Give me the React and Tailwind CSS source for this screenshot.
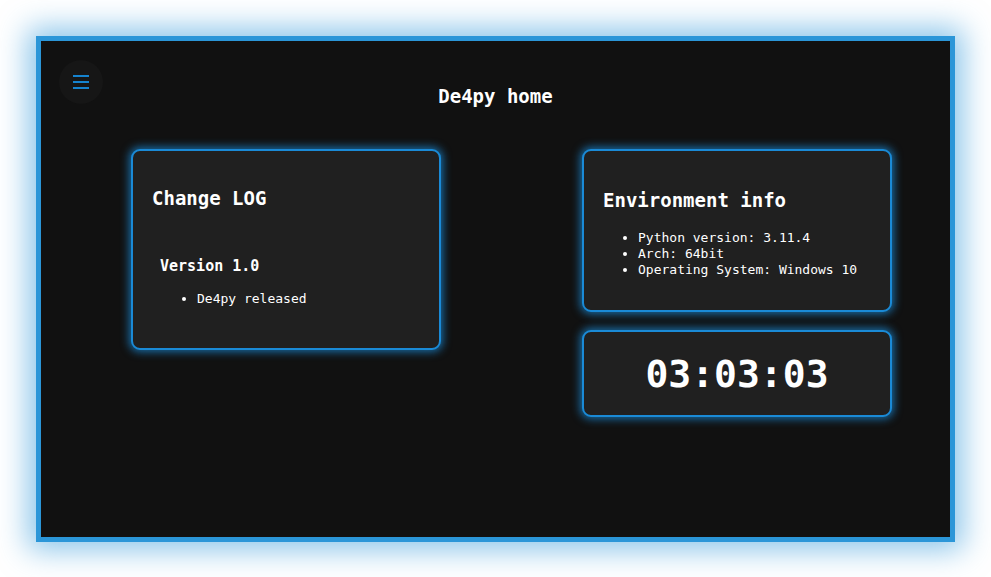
const mono = { fontFamily: '"DejaVu Sans Mono", "Liberation Mono", monospace' };

function Card({ className = '', children }) {
  return (
    <div
      className={`rounded-[9px] border-2 border-[#1a8ad6] bg-[#202020] shadow-[0_0_9px_2px_rgba(26,138,214,0.75)] ${className}`}
    >
      {children}
    </div>
  );
}

export default function App() {
  const env = [
    'Python version: 3.11.4',
    'Arch: 64bit',
    'Operating System: Windows 10',
  ];

  return (
    <div className="h-[577px] w-full bg-white p-[36px] pb-[35px]" style={mono}>
      <div className="flex h-full flex-col border-[5px] border-[#2b96d8] bg-[#111111] shadow-[0_0_28px_8px_rgba(43,150,216,0.55)]">
        <div className="relative flex h-[108px] items-start justify-center pt-[46px]">
          <button className="absolute left-[18px] top-[19px] flex h-[44px] w-[44px] flex-col items-center justify-center gap-[4px] rounded-full bg-[#161616]">
            <span className="block h-[2px] w-[16px] bg-[#1583cf]" />
            <span className="block h-[2px] w-[16px] bg-[#1583cf]" />
            <span className="block h-[2px] w-[16px] bg-[#1583cf]" />
          </button>
          <h1 className="text-[19px] font-bold leading-none text-white">De4py home</h1>
        </div>

        <div className="flex items-start justify-between pl-[90px] pr-[58px]">
          <Card className="h-[201px] w-[310px] px-[19px] pt-[38px]">
            <h2 className="text-[19px] font-bold leading-none text-white">Change LOG</h2>
            <h3 className="mt-[51px] pl-[8px] text-[15px] font-bold leading-none text-white">Version 1.0</h3>
            <ul className="mt-[17px] list-disc pl-[45px] text-[13px] leading-[16px] text-white">
              <li>De4py released</li>
            </ul>
          </Card>

          <div className="flex flex-col gap-[18px]">
            <Card className="h-[163px] w-[310px] px-[19px] pt-[40px]">
              <h2 className="text-[19px] font-bold leading-none text-white">Environment info</h2>
              <ul className="mt-[20px] list-disc pl-[35px] text-[13px] leading-[16px] text-white">
                {env.map((line) => (
                  <li key={line}>{line}</li>
                ))}
              </ul>
            </Card>
            <Card className="flex h-[87px] w-[310px] items-center justify-center">
              <span className="text-[38px] font-bold leading-none text-white">03:03:03</span>
            </Card>
          </div>
        </div>
      </div>
    </div>
  );
}
